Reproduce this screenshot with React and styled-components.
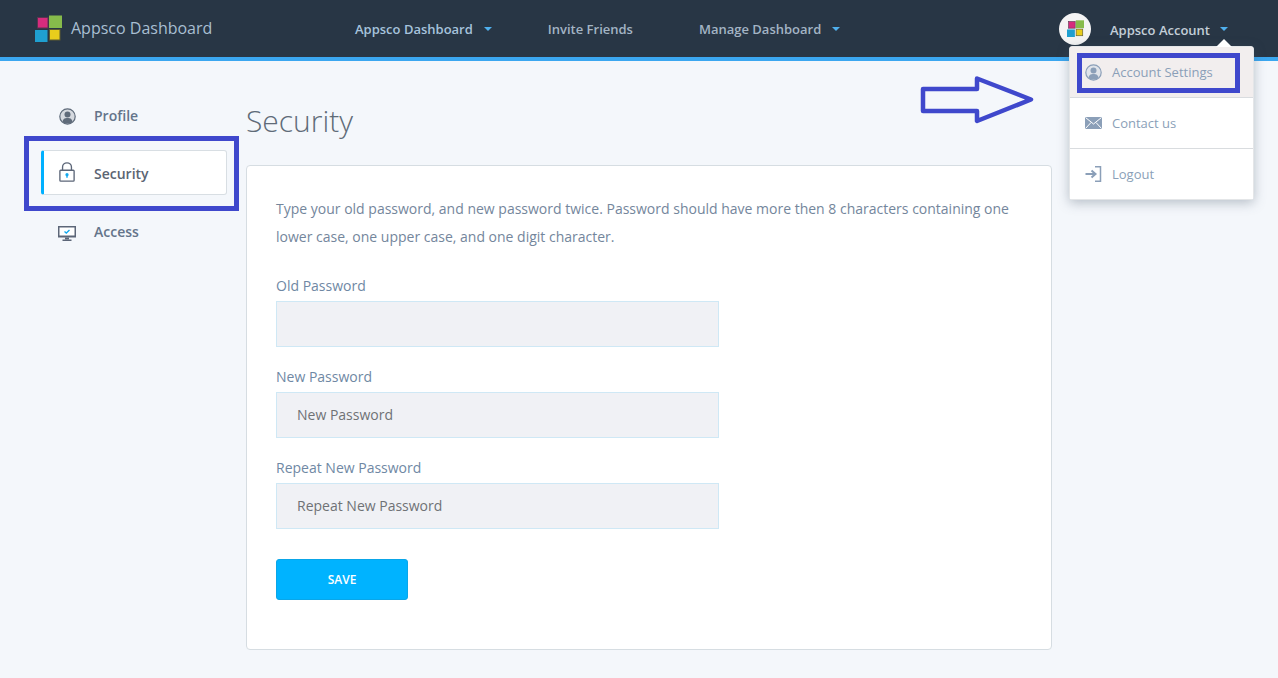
import React from "react";
import styled, { createGlobalStyle } from "styled-components";

const GlobalStyle = createGlobalStyle`
  html, body {
    margin: 0;
    padding: 0;
    background: #f4f7fb;
    font-family: "Open Sans", "Liberation Sans", sans-serif;
  }
  * { box-sizing: border-box; }
`;

const Page = styled.div`
  position: relative;
  width: 1278px;
  height: 678px;
  overflow: hidden;
  background: #f4f7fb;
`;

const Header = styled.header`
  display: flex;
  align-items: center;
  height: 61px;
  padding: 0 0 0 35px;
  background: #283645;
  border-bottom: 4px solid #3ba7f0;
`;

const Brand = styled.div`
  display: flex;
  align-items: center;
  gap: 9px;
  width: 320px;
  margin-top: -1px;
  color: #a9bfd2;
  font-size: 16px;
`;

const Nav = styled.nav`
  display: flex;
  align-items: center;
  width: 704px;
`;

const NavItem = styled.a`
  display: flex;
  align-items: center;
  gap: 11px;
  margin-right: ${(p) => p.$gap}px;
  color: ${(p) => (p.$active ? "#a6c3dc" : "#a3b4c4")};
  font-size: 13px;
  font-weight: 600;
`;

const Caret = styled.span`
  width: 0;
  height: 0;
  border-left: 4px solid transparent;
  border-right: 4px solid transparent;
  border-top: 4px solid #4fb0ee;
`;

const Account = styled.div`
  display: flex;
  align-items: center;
  color: #c3ced8;
  font-size: 13px;
  font-weight: 600;
  gap: 10px;
`;

const AccountName = styled.span`
  padding-top: 2px;
`;

const Avatar = styled.div`
  display: flex;
  align-items: center;
  justify-content: center;
  width: 32px;
  height: 32px;
  margin-right: 9px;
  border-radius: 50%;
  background: #f4f4f4;
`;

const Content = styled.div`
  display: flex;
  align-items: flex-start;
  padding: 31px 0 0 41px;
`;

const Side = styled.aside`
  display: flex;
  flex-direction: column;
  gap: 13px;
  width: 186px;
  margin-right: 19px;
`;

const SideItem = styled.div`
  display: flex;
  align-items: center;
  gap: 18px;
  height: 45px;
  padding-top: 2px;
  padding-left: ${(p) => (p.$active ? "14px" : "17px")};
  color: ${(p) => (p.$active ? "#5b6573" : "#64748a")};
  font-size: 14px;
  font-weight: 550;
  ${(p) =>
    p.$active &&
    `
    background: #fff;
    border: 1px solid #d8dee3;
    border-left: 3px solid #00b0ff;
    border-radius: 3px;
  `}
`;

const SideIcon = styled.span`
  display: flex;
  width: 18px;
  justify-content: center;
  margin-top: ${(p) => p.$shift}px;
`;

const Main = styled.main`
  width: 806px;
`;

const Title = styled.h1`
  margin: 7px 0 22px;
  color: #5f6b78;
  font-size: 30px;
  line-height: 44px;
  font-weight: 300;
`;

const Card = styled.section`
  height: 485px;
  padding: 29px;
  background: #fff;
  border: 1px solid #d6dde2;
  border-radius: 4px;
`;

const Intro = styled.p`
  margin: 0 0 25px;
  color: #74869c;
  font-size: 14px;
  line-height: 28px;
`;

const Field = styled.div`
  margin-bottom: 20px;
`;

const Label = styled.label`
  display: block;
  margin-bottom: 6px;
  color: #6f88a4;
  font-size: 14px;
  line-height: 19px;
`;

const Input = styled.input`
  display: block;
  width: 443px;
  height: 46px;
  padding: 0 20px 2px;
  background: #f0f1f5;
  border: 1px solid #cfe8f5;
  color: #6f7275;
  font-family: inherit;
  font-size: 14px;
  outline: none;
  &::placeholder {
    color: #6f7275;
    opacity: 1;
  }
`;

const SaveButton = styled.button`
  display: block;
  width: 132px;
  height: 41px;
  margin-top: 30px;
  background: #00b3ff;
  border: 1px solid #0aa6e8;
  border-radius: 3px;
  color: #fff;
  font-family: inherit;
  font-size: 12px;
  font-weight: 600;
`;

const Dropdown = styled.div`
  position: absolute;
  top: 46px;
  left: 1069px;
  width: 185px;
  height: 154px;
  background: #fff;
  border: 1px solid #e4e6e8;
  border-radius: 3px;
  box-shadow: 0 3px 12px rgba(70, 85, 105, 0.35);
  &::before {
    content: "";
    position: absolute;
    top: -8px;
    left: 146px;
    border-left: 8px solid transparent;
    border-right: 8px solid transparent;
    border-bottom: 8px solid #fff;
  }
`;

const MenuItem = styled.div`
  display: flex;
  align-items: center;
  gap: 10px;
  height: ${(p) => (p.$last ? "50px" : "51px")};
  padding-left: 15px;
  color: #8b9fb8;
  font-size: 13px;
  background: ${(p) => (p.$active ? "#f2eeee" : "#fff")};
  border-bottom: ${(p) => (p.$last ? "none" : "1px solid #d9dcdf")};
`;

const Highlight = styled.div`
  position: absolute;
  top: ${(p) => p.$top}px;
  left: ${(p) => p.$left}px;
  width: ${(p) => p.$width}px;
  height: ${(p) => p.$height}px;
  border: 5px solid #3f48cc;
`;

const ArrowMark = styled.svg`
  position: absolute;
  top: 75px;
  left: 920px;
`;

const LogoIcon = ({ size = 27 }) => (
  <svg width={size} height={size} viewBox="0 0 27 27">
    <rect x="2.500" y="2.500" width="10.500" height="10.500" fill="#d62c7d" stroke="#5c3350" />
    <rect x="14" y="0.500" width="13" height="12.500" fill="#86bb4b" />
    <rect x="0" y="15" width="12.500" height="12" fill="#1f9fd0" />
    <rect x="14.500" y="14.500" width="10.500" height="10.500" fill="#e8cd1c" stroke="#5c5a30" />
  </svg>
);

const UserIcon = ({ color, tint }) => (
  <svg width="17" height="17" viewBox="0 0 17 17">
    <circle cx="8.500" cy="8.500" r="7.700" fill={tint} stroke={color} strokeWidth="1.200" />
    <circle cx="8.500" cy="6.500" r="3" fill={color} />
    <path d="M3.500 14 C4 10.500 6 10 8.500 10 S13 10.500 13.500 14 C11 16 6 16 3.500 14Z" fill={color} />
  </svg>
);

const LockIcon = () => (
  <svg width="16" height="20" viewBox="0 0 18 22">
    <path d="M4 9 V5.500 a5 4.800 0 0 1 10 0 V9" fill="none" stroke="#5c6678" strokeWidth="1.500" />
    <rect x="1" y="9" width="16" height="12.200" rx="1" fill="none" stroke="#5c6678" strokeWidth="1.500" />
    <circle cx="9" cy="14" r="1.800" fill="#14a9ee" />
    <rect x="8.200" y="14" width="1.600" height="3.500" fill="#14a9ee" />
  </svg>
);

const MonitorIcon = () => (
  <svg width="18" height="15" viewBox="0 0 18 15">
    <rect x="0" y="0" width="18" height="11.500" fill="#5c6678" />
    <rect x="1.500" y="1.500" width="15" height="8" fill="#fff" />
    <path d="M6.500 5.500 L8.300 7 L11.500 4" fill="none" stroke="#14a9ee" strokeWidth="1.400" />
    <rect x="7" y="11.500" width="4" height="2" fill="#5c6678" />
    <rect x="4.500" y="13.500" width="9" height="1.500" fill="#5c6678" />
  </svg>
);

const MailIcon = () => (
  <svg width="17" height="12" viewBox="0 0 17 12">
    <rect width="17" height="12" fill="#8b9fb8" />
    <path d="M0.500 0.500 L8.500 7 L16.500 0.500 M0.500 11.500 L6 5.500 M16.500 11.500 L11 5.500" fill="none" stroke="#fff" strokeWidth="1" />
  </svg>
);

const LogoutIcon = () => (
  <svg width="17" height="16" viewBox="0 0 17 16">
    <path d="M10 0.800 H15.500 V15.200 H10" fill="none" stroke="#8b9fb8" strokeWidth="1.500" />
    <path d="M0.500 8 H10 M6.500 4.500 L10.500 8 L6.500 11.500" fill="none" stroke="#8b9fb8" strokeWidth="2" />
  </svg>
);

const fields = [
  { label: "Old Password", placeholder: "" },
  { label: "New Password", placeholder: "New Password" },
  { label: "Repeat New Password", placeholder: "Repeat New Password" },
];

export default function App() {
  return (
    <Page>
      <GlobalStyle />
      <Header>
        <Brand>
          <LogoIcon />
          Appsco Dashboard
        </Brand>
        <Nav>
          <NavItem $active $gap={56}>
            Appsco Dashboard <Caret />
          </NavItem>
          <NavItem $gap={66}>Invite Friends</NavItem>
          <NavItem $gap={0}>
            Manage Dashboard <Caret />
          </NavItem>
        </Nav>
        <Account>
          <Avatar>
            <LogoIcon size={17} />
          </Avatar>
          <AccountName>Appsco Account</AccountName>
          <Caret />
        </Account>
      </Header>

      <Content>
        <Side>
          <SideItem>
            <SideIcon $shift={1}>
              <UserIcon color="#5f6b7a" tint="#d5d9df" />
            </SideIcon>
            Profile
          </SideItem>
          <SideItem $active>
            <SideIcon $shift={-3}>
              <LockIcon />
            </SideIcon>
            Security
          </SideItem>
          <SideItem>
            <SideIcon $shift={4}>
              <MonitorIcon />
            </SideIcon>
            Access
          </SideItem>
        </Side>
        <Main>
          <Title>Security</Title>
          <Card>
            <Intro>
              Type your old password, and new password twice. Password should have more then 8
              characters containing one lower case, one upper case, and one digit character.
            </Intro>
            {fields.map((f) => (
              <Field key={f.label}>
                <Label>{f.label}</Label>
                <Input placeholder={f.placeholder} />
              </Field>
            ))}
            <SaveButton>SAVE</SaveButton>
          </Card>
        </Main>
      </Content>

      <Dropdown>
        <MenuItem $active>
          <UserIcon color="#8b9fb8" tint="#e0e4ea" />
          Account Settings
        </MenuItem>
        <MenuItem>
          <MailIcon />
          Contact us
        </MenuItem>
        <MenuItem $last>
          <LogoutIcon />
          Logout
        </MenuItem>
      </Dropdown>

      <Highlight $top={136} $left={24} $width={215} $height={75} />
      <Highlight $top={53} $left={1077} $width={163} $height={40} />
      <ArrowMark width="116" height="50" viewBox="0 0 116 50">
        <path
          d="M3 14 H57 V3.500 L111 24.500 L57 46 V36 H3 Z"
          fill="none"
          stroke="#3f48cc"
          strokeWidth="4.500"
          strokeLinejoin="round"
        />
      </ArrowMark>
    </Page>
  );
}
